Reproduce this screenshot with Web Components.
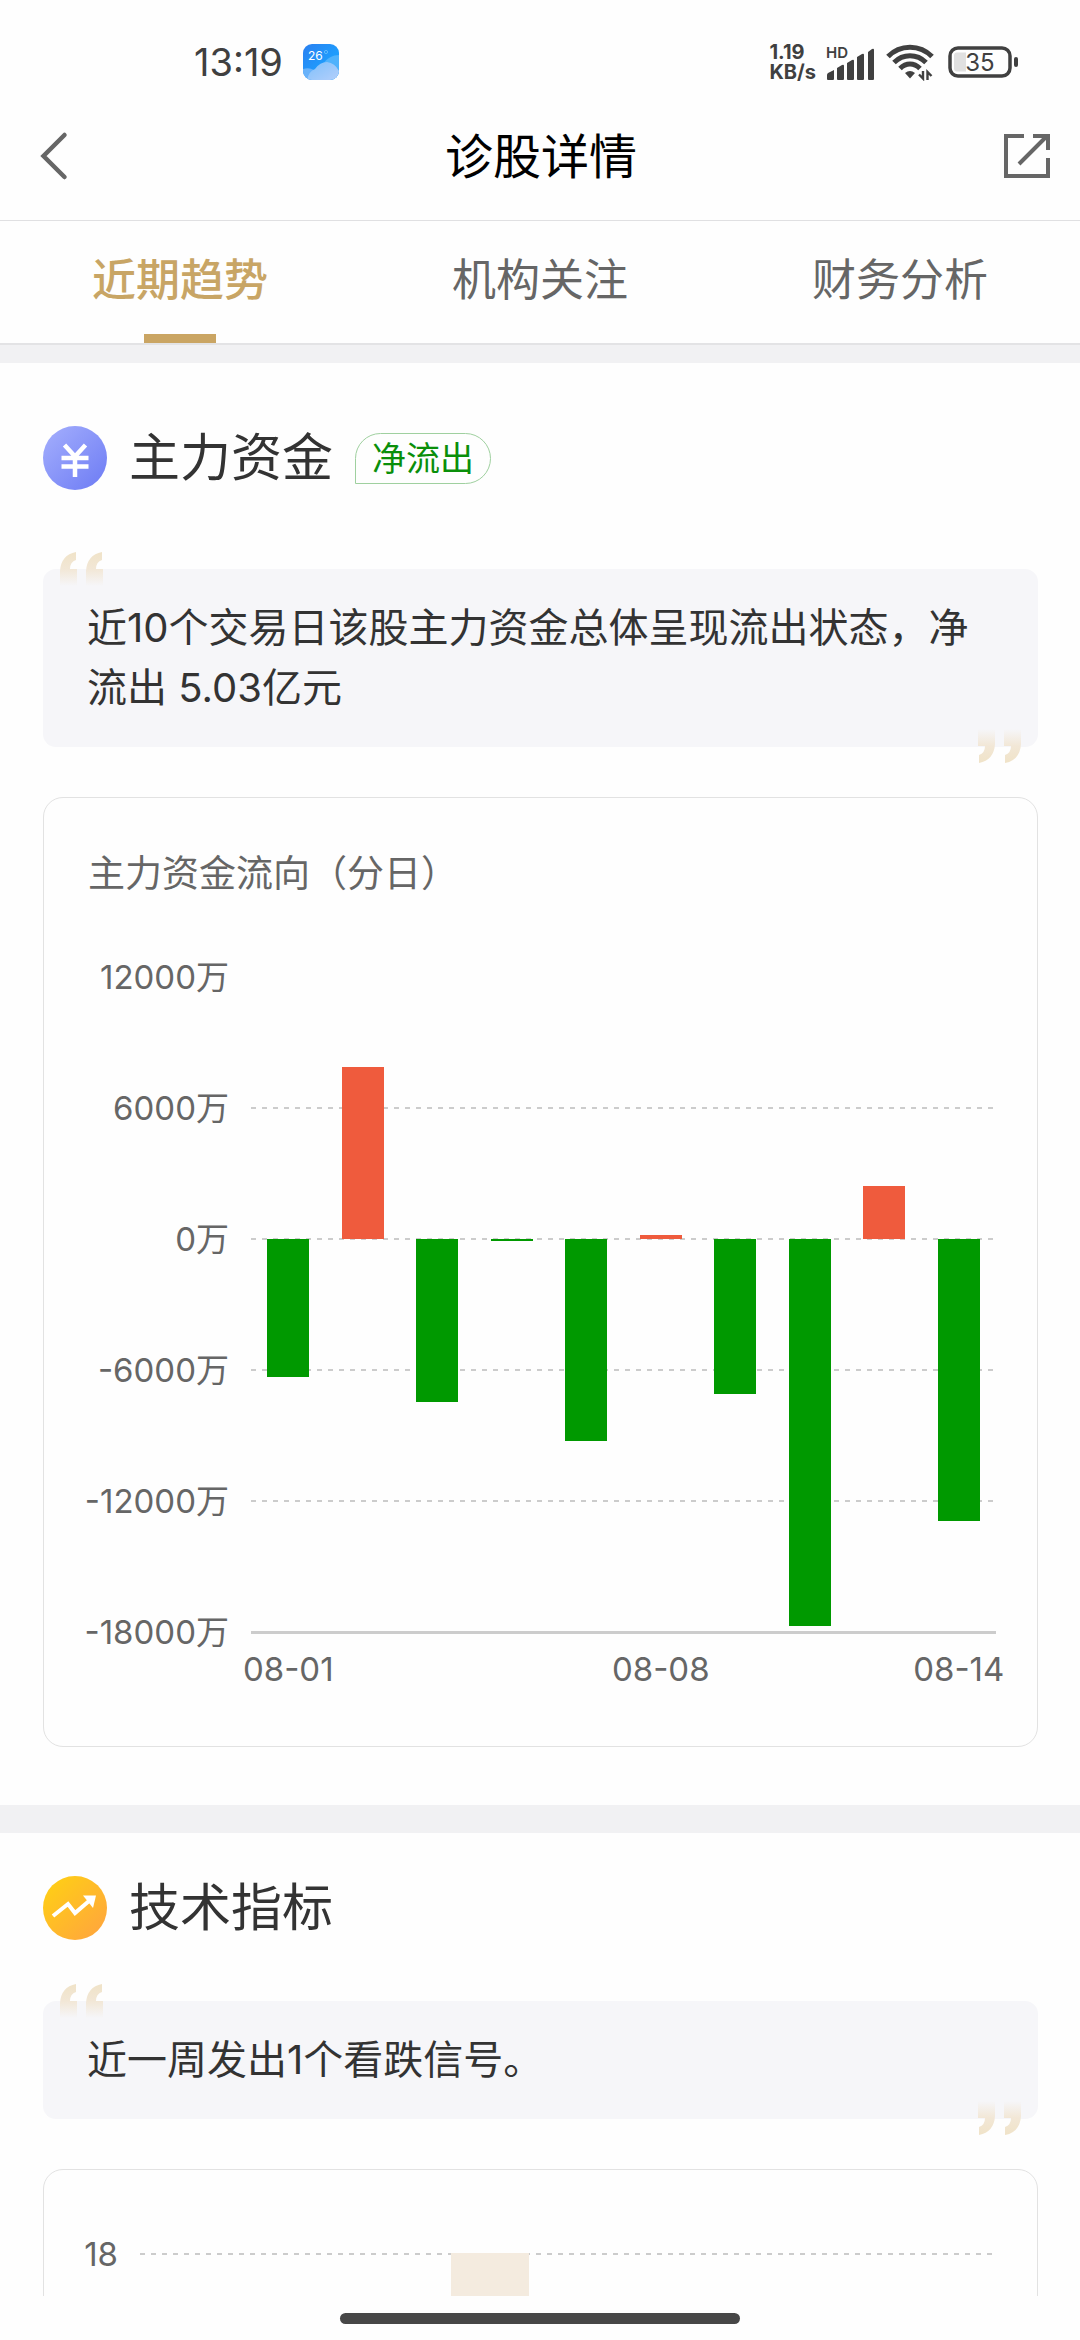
<!DOCTYPE html>
<html lang="zh-CN">
<head>
<meta charset="utf-8">
<meta name="viewport" content="width=device-width">
<title>诊股详情</title>
<style>
  html, body { margin: 0; height: 100%; }
  body { background: #fefefe; color: #333; font-family: Inter, "Noto Sans CJK SC", sans-serif; }
</style>
</head>
<body>
<stock-page></stock-page>

<script>
const define = (name, html, setup) => {
  const tpl = document.createElement('template');
  tpl.innerHTML = html;
  customElements.define(name, class extends HTMLElement {
    connectedCallback() {
      if (this.shadowRoot) return;
      this.attachShadow({ mode: 'open' }).append(tpl.content.cloneNode(true));
      if (setup) setup(this, this.shadowRoot);
    }
  });
};

define('status-bar', `
<style>
  :host { display: flex; justify-content: space-between; align-items: center; padding: 22px 60px 0 194px; box-sizing: border-box; color: #404040; height: 102px; }
  .left, .right { display: flex; align-items: center; }
  .left { gap: 20px; }
  .right { gap: 10px; }
  time { font-size: 38px; line-height: 40px; font-weight: 400; }
  .rate { display: grid; font-weight: 700; font-size: 20px; line-height: 20px; }
  .wifi { margin-right: 4px; }
  svg { display: block; flex: none; }
</style>
<div class="left">
  <time>13:19</time>
  <svg width="36" height="36" viewBox="0 0 36 36">
    <defs>
      <linearGradient id="sky" x1="0" y1="0" x2="1" y2="1"><stop offset="0" stop-color="#2a7ff0"/><stop offset=".6" stop-color="#1e9dfd"/></linearGradient>
      <linearGradient id="cl" x1="0" y1="0" x2="1" y2="1"><stop offset="0" stop-color="#7fc0fb"/><stop offset="1" stop-color="#b3cffb"/></linearGradient>
      <clipPath id="r"><rect width="36" height="36" rx="9"/></clipPath>
    </defs>
    <g clip-path="url(#r)">
      <rect width="36" height="36" fill="url(#sky)"/>
      <path d="M20 20 C24 14 30 11 36 11 V36 H20Z" fill="#4fb2fc"/>
      <path d="M0 25 Q6 23 11 26 L16 36 H0Z" fill="#68b2fa"/>
      <path d="M4 36 Q6 27 12 25 Q17 18 24 18 Q32 19 36 27 V36Z" fill="url(#cl)"/>
      <circle cx="23" cy="8" r="1.6" fill="none" stroke="#6fc4ff" stroke-width=".8"/>
    </g>
    <text x="5" y="16" font-size="12" fill="#fff" font-family="Inter">26</text>
  </svg>
</div>
<div class="right">
  <div class="rate"><span>1.19</span><span>KB/s</span></div>
  <svg width="50" height="38" viewBox="0 -2 50 38" fill="#404040">
    <text x="0" y="13" font-size="15" font-weight="600" font-family="Inter">HD</text>
    <path d="M1 34v-4q0-1 1-2l6-3v9q0 1-1 1H2q-1 0-1-1z M11 34V23l5-3q2-1 2 1v13q0 1-1 1h-5q-1 0-1-1z M21 34V18l5-3q2-1 2 1v18q0 1-1 1h-5q-1 0-1-1z M31 34V12l5-3q2-1 2 1v24q0 1-1 1h-5q-1 0-1-1z M42 34V7l4-3q2-1 2 1v29q0 1-1 1h-4q-1 0-1-1z"/>
  </svg>
  <svg class="wifi" width="48" height="38" viewBox="0 0 48 38" fill="none" stroke="#404040" stroke-width="5">
    <path d="M2 13.500 C14 1 34 1 46 13.500 M8 19.500 C17 10.500 31 10.500 40 19.500 M14 25.500 C20 19.500 28 19.500 34 25.500"/>
    <path d="M19 30 Q24 26 29 30 L24 35.500Z" fill="#404040" stroke="none"/>
    <path d="M37 28v7.500l-4-4M41.500 37v-8l4 4" stroke-width="2.400"/>
  </svg>
  <svg width="72" height="32" viewBox="0 0 72 32">
    <rect x="2" y="2" width="60" height="28" rx="8" fill="none" stroke="#404040" stroke-width="3.500"/>
    <path d="M18 6.500H9q-3 0-3 3v13q0 3 3 3h9z" fill="#e0e0e0"/>
    <rect x="66" y="11" width="4" height="10" rx="2" fill="#404040"/>
    <text x="32" y="24.500" text-anchor="middle" font-size="24" fill="#404040" font-family="Inter">35</text>
  </svg>
</div>`);

define('app-header', `
<style>
  :host { display: grid; grid-template-columns: 1fr auto 1fr; align-items: center; height: 110px; padding: 0 30px 8px 32px; border-bottom: 1px solid #e0e0e2; }
  h1 { margin: 0; font-size: 48px; line-height: 60px; font-weight: 400; color: #000; }
  button { display: block; padding: 0; border: 0; background: none; }
  button:last-child { justify-self: end; }
  svg { display: block; }
</style>
<button aria-label="返回"><svg width="44" height="60" viewBox="0 0 44 60" fill="none" stroke="#666" stroke-width="4.500" stroke-linecap="round"><path d="M32.500 8 L11.500 29 L32.500 50"/></svg></button>
<h1><slot></slot></h1>
<button aria-label="分享"><svg width="48" height="48" viewBox="0 0 48 48" fill="none" stroke="#666" stroke-width="4"><path d="M22 3H4V43H46V28L46 25M17 31L44 4"/><path d="M31 3H46V17"/></svg></button>`);

define('tab-bar', `
<style>
  :host { display: block; }
  nav { display: grid; grid-auto-flow: column; grid-auto-columns: 1fr; border-bottom: 2px solid #e3e3e5; }
</style>
<nav role="tablist"><slot></slot></nav>`);

define('tab-item', `
<style>
  :host { display: block; }
  button { display: grid; grid-template-rows: 109px 9px; justify-items: center; align-items: center; width: 100%; padding: 4px 0 0; border: 0; background: none; font: 400 44px/60px Inter, "Noto Sans CJK SC", sans-serif; color: #666; }
  i { width: 72px; height: 9px; }
  :host([active]) button { color: #c8a565; font-weight: 500; }
  :host([active]) i { background: #caa563; }
</style>
<button role="tab"><slot></slot><i></i></button>`);

define('page-section', `
<style>
  :host { display: block; padding: 0 42px 58px 43px; border-top: 28px solid #f1f1f3; }
  :host([first]) { border-top-width: 18px; }
  header { display: flex; align-items: center; padding: 43px 0 61px; }
  :host([first]) header { padding: 63px 0 79px; }
  ::slotted([slot=icon]) { margin-right: 22px; }
  ::slotted([slot=tag]) { margin-left: 22px; }
  h2 { margin: 0; font-size: 51px; line-height: 64px; font-weight: 400; }
</style>
<header><slot name="icon"></slot><h2></h2><slot name="tag"></slot></header>
<slot></slot>`, (el, root) => { root.querySelector('h2').textContent = el.getAttribute('heading'); });

define('round-icon', `
<style>
  :host { display: block; flex: none; }
  svg { display: block; }
  .g { display: none; }
  :host([name=yuan]) .yuan, :host([name=trend]) .trend { display: inline; }
</style>
<svg width="64" height="64" viewBox="0 0 64 64" fill="none" stroke="#fff">
  <defs>
    <linearGradient id="b" x1=".1" y1=".1" x2=".9" y2=".9"><stop offset="0" stop-color="#9faafc"/><stop offset="1" stop-color="#7280f5"/></linearGradient>
    <linearGradient id="o" x1=".1" y1=".1" x2=".9" y2=".9"><stop offset="0" stop-color="#ffce16"/><stop offset="1" stop-color="#ffa73c"/></linearGradient>
  </defs>
  <g class="g yuan"><circle cx="32" cy="32" r="32" fill="url(#b)" stroke="none"/><path d="M21.500 19L32 30.500L42.500 19M18.500 32H45.500M18.500 40.500H45.500M32 30V51" stroke-width="4.500"/></g>
  <g class="g trend"><circle cx="32" cy="32" r="32" fill="url(#o)" stroke="none"/><path d="M10 40L25 28L32 37L46 25" stroke-width="4"/><path d="M40 19.500H53L50 32Z" fill="#fff" stroke="none"/></g>
</svg>`);

define('flow-tag', `
<style>
  :host { display: block; padding: 0 16px; border: 1px solid #9fd09f; border-radius: 26px 26px 26px 0; font-size: 34px; line-height: 49px; color: #0a8f0a; }
</style>
<slot></slot>`);

define('quote-note', `
<style>
  :host { display: block; position: relative; margin-bottom: 50px; padding: 29px 44px; border-radius: 13px; background: #f6f6f9; }
  p { margin: 0; font-size: 40px; line-height: 60px; }
  svg { position: absolute; left: 17px; top: -17px; }
  svg + svg { left: auto; top: auto; right: 17px; bottom: -16px; transform: rotate(180deg); }
</style>
<svg width="44" height="34" viewBox="0 0 44 34"><defs><linearGradient id="q" x1="0" y1="0" x2="0" y2="1"><stop offset="0" stop-color="#f0e3c8"/><stop offset=".5" stop-color="#f2e7d6"/><stop offset="1" stop-color="#f2e7d6" stop-opacity="0"/></linearGradient></defs><path fill="url(#q)" d="M0 34V19Q1 3 16 0V8Q10 10 10 17H17V34ZM26 34V19Q27 3 42 0V8Q36 10 36 17H43V34Z"/></svg>
<svg width="44" height="34" viewBox="0 0 44 34"><path fill="url(#q)" d="M0 34V19Q1 3 16 0V8Q10 10 10 17H17V34ZM26 34V19Q27 3 42 0V8Q36 10 36 17H43V34Z"/></svg>
<p><slot></slot></p>`);

define('chart-card', `
<style>
  :host { display: block; padding: 46px 41px 48px 44px; border: 1px solid #e2e2e2; border-radius: 20px; }
  :host(:not([heading])) { padding-top: 19px; }
  h3 { margin: 0 0 8px; font-size: 37px; line-height: 60px; font-weight: 400; color: #666; }
  :host(:not([heading])) h3 { display: none; }
</style>
<h3></h3><slot></slot>`, (el, root) => { root.querySelector('h3').textContent = el.getAttribute('heading') || ''; });

/* Column chart: every tick row is 131px tall and its label is centred on the grid line. */
define('column-chart', `
<style>
  :host { --row: 131px; display: grid; grid-template-columns: 141px minmax(0, 1fr); column-gap: 22px; color: #666; font-size: 33px; }
  :host([narrow]) { grid-template-columns: 30px minmax(0, 1fr); }
  .ticks { display: grid; grid-template-columns: minmax(0, 1fr); justify-items: end; line-height: var(--row); white-space: nowrap; }
  .plot { display: grid; grid-template-rows: auto 40px; row-gap: 15px; align-content: start; padding-top: 64px; }
  .lines, .bars { grid-area: 1 / 1; }
  .lines div { height: var(--row); box-sizing: border-box; }
  .dash { background: repeating-linear-gradient(90deg, #ccc 0 5px, transparent 5px 11px) 0 0 / 100% 2px no-repeat; }
  .lines .solid { height: 3px; background: #ccc; }
  .bars, .dates { display: grid; grid-auto-flow: column; grid-auto-columns: minmax(0, 1fr); justify-items: center; align-items: start; }
  .bars i { width: 56%; }
  .bars .band { width: 100%; background: #f4ebdf; }
  .up { background: #ef5b3d; }
  .down { background: #009900; }
  .dates { line-height: 40px; }
  .dates span { white-space: nowrap; display: flex; justify-content: center; width: 0; }
</style>
<div class="ticks"></div>
<div class="plot"><div class="lines"></div><div class="bars"></div><div class="dates"></div></div>`,
(el, root) => {
  const $ = s => root.querySelector(s);
  const make = (tag, cls, text) => { const n = document.createElement(tag); if (cls) n.className = cls; if (text) n.textContent = text; return n; };
  const ticks = el.getAttribute('ticks').split(',');
  const unit = el.getAttribute('unit') || '';
  const row = 131;
  ticks.forEach((t, i) => {
    $('.ticks').append(make('span', '', t + unit));
    const hidden = el.hasAttribute('open-top') && i === 0;
    $('.lines').append(make('div', hidden ? '' : i === ticks.length - 1 ? 'solid' : 'dash'));
  });
  const step = ticks[0] - ticks[1];
  const bandAt = el.getAttribute('band');
  const values = (el.getAttribute('values') || '').split(',').filter(Boolean).map(Number);
  values.forEach(v => {
    const bar = make('i', v > 0 ? 'up' : 'down');
    bar.style.marginTop = Math.round((ticks[0] - Math.max(v, 0)) / step * row) + 1 + 'px';
    bar.style.height = Math.max(2, Math.round(Math.abs(v) / step * row)) + 'px';
    $('.bars').append(bar);
  });
  if (bandAt) for (let i = 0; i < 11; i++) {
    const cell = make('i', i === +bandAt ? 'band' : '');
    cell.style.height = row * (ticks.length - 1) + 'px';
    $('.bars').append(cell);
  }
  const dates = (el.getAttribute('dates') || '').split(',');
  if (dates.length > 1) dates.forEach(d => $('.dates').append(make('span', '', d)));
});

define('home-indicator', `
<style>
  :host { display: flex; justify-content: center; align-items: center; height: 44px; flex: none; background: #fefefe; }
  i { width: 37%; height: 11px; border-radius: 6px; background: #474747; }
</style>
<i></i>`);

define('stock-page', `
<style>
  :host { display: flex; flex-direction: column; height: 100vh; }
  status-bar, app-header, tab-bar { flex: none; }
  main { flex: 1; min-height: 0; overflow: hidden; }
</style>
<status-bar></status-bar>
<app-header>诊股详情</app-header>
<tab-bar><tab-item active>近期趋势</tab-item><tab-item>机构关注</tab-item><tab-item>财务分析</tab-item></tab-bar>
<main>
  <page-section first heading="主力资金">
    <round-icon slot="icon" name="yuan"></round-icon>
    <flow-tag slot="tag">净流出</flow-tag>
    <quote-note>近10个交易日该股主力资金总体呈现流出状态，净流出 5.03亿元</quote-note>
    <chart-card heading="主力资金流向（分日）">
      <column-chart open-top unit="万" ticks="12000,6000,0,-6000,-12000,-18000"
        values="-6302,7864,-7466,-90,-9250,180,-7110,-17725,2430,-12930"
        dates="08-01,,,,,08-08,,,,08-14"></column-chart>
    </chart-card>
  </page-section>
  <page-section heading="技术指标">
    <round-icon slot="icon" name="trend"></round-icon>
    <quote-note>近一周发出1个看跌信号。</quote-note>
    <chart-card>
      <column-chart narrow ticks="18, , " band="4"></column-chart>
    </chart-card>
  </page-section>
</main>
<home-indicator></home-indicator>`);
</script>
</body>
</html>
